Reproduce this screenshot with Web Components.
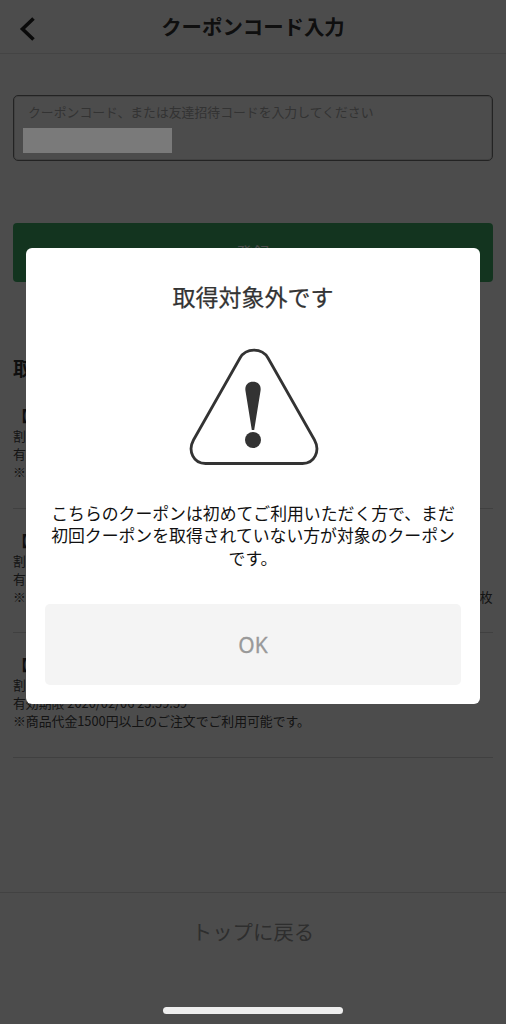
<!DOCTYPE html>
<html lang="ja">
<head>
<meta charset="utf-8">
<title>クーポンコード入力</title>
<style>
  html, body {
    margin: 0;
    padding: 0;
    background: #fff;
    font-family: "Noto Sans CJK JP", "Noto Sans", sans-serif;
    color: #333;
  }
</style>
</head>
<body>

<template id="template-coupon-header">
  <style>
    :host {
      display: flex;
      align-items: center;
      justify-content: center;
      position: relative;
      height: 53px;
      border-bottom: 1px solid #e5e5e5;
      font-size: 20.4px;
      font-weight: 700;
      line-height: 1;
    }
    svg {
      position: absolute;
      left: 17px;
      top: 14px;
    }
  </style>
  <svg width="22" height="30" viewBox="0 0 22 30">
    <path d="M16.5 4.5 L5.5 15 L16.5 25.5" fill="none" stroke="#222" stroke-width="3.6"/>
  </svg>
  <slot></slot>
</template>

<template id="template-coupon-input">
  <style>
    :host {
      display: flex;
      flex-direction: column;
      position: relative;
      box-sizing: border-box;
      height: 66px;
      margin: 41px 13px 0;
      padding: 8px 14px;
      border: 1px solid #777;
      box-shadow: inset 0 0 0 1px #ddd;
      border-radius: 5px;
      font-size: 12.85px;
      line-height: 15px;
      color: #aaa;
    }
    .masked {
      position: absolute;
      left: 9px;
      top: 32px;
      width: 149px;
      height: 25px;
      background: #7a7a7a;
      z-index: 20;
    }
  </style>
  <slot></slot>
  <div class="masked"></div>
</template>

<template id="template-primary-button">
  <style>
    :host {
      display: flex;
      align-items: center;
      justify-content: center;
      height: 59px;
      margin: 62px 13px 0;
      border-radius: 4px;
      background: #42b06a;
      color: #fff;
      font-size: 17px;
    }
  </style>
  <slot></slot>
</template>

<template id="template-coupon-list">
  <style>
    :host {
      display: block;
      margin: 0 13px;
      padding-top: 73px;
    }
    h2 {
      margin: 0;
      font-size: 19px;
      line-height: 26px;
      font-weight: 700;
    }
    .items {
      margin-top: 3px;
    }
  </style>
  <h2><slot name="heading"></slot></h2>
  <div class="items"><slot></slot></div>
</template>

<template id="template-coupon-item">
  <style>
    :host {
      display: block;
      height: 124.5px;
      box-sizing: border-box;
      border-bottom: 1px solid #d8d8d8;
      font-size: 12.85px;
      line-height: 18px;
      white-space: nowrap;
    }
    .title {
      padding-top: 21px;
      font-size: 15px;
      font-weight: 700;
      line-height: 22px;
    }
    ::slotted(div) {
      color: #444;
    }
  </style>
  <div class="title"><slot name="title"></slot></div>
  <slot></slot>
</template>

<template id="template-page-footer">
  <style>
    :host {
      display: flex;
      align-items: center;
      justify-content: center;
      position: absolute;
      left: 0;
      right: 0;
      top: 892px;
      height: 76px;
      border-top: 1px solid #ddd;
      font-size: 20.4px;
      color: #999;
    }
  </style>
  <slot></slot>
</template>

<template id="template-alert-dialog">
  <style>
    :host {
      display: block;
      position: fixed;
      inset: 0;
      box-sizing: border-box;
      padding: 248px 26px 0;
      background: rgba(0, 0, 0, 0.7);
      z-index: 10;
    }
    .panel {
      display: flex;
      flex-direction: column;
      align-items: center;
      box-sizing: border-box;
      height: 456px;
      padding: 0 19px;
      background: #fff;
      border-radius: 6px;
    }
    h1 {
      margin: 31px 0 0;
      font-size: 23px;
      line-height: 34px;
      font-weight: 400;
      -webkit-text-stroke: 0.25px #333;
      color: #333;
    }
    svg {
      display: block;
      margin: 36px 0 0 1px;
      overflow: visible;
    }
    .message {
      margin-top: 37px;
      width: 416px;
      font-size: 16.85px;
      line-height: 22.3px;
      text-align: center;
      color: #111;
    }
    button {
      display: block;
      margin-top: 35px;
      width: 416px;
      height: 81px;
      padding: 2px 0 0;
      border: 0;
      border-radius: 5px;
      background: #f4f4f4;
      color: #999;
      font: 400 21px "Noto Sans", "Noto Sans CJK JP", sans-serif;
      -webkit-text-stroke: 0.3px #999;
    }
  </style>
  <div class="panel">
    <h1><slot name="title"></slot></h1>
    <svg width="128" height="116" viewBox="0 0 128 116">
      <path d="M50 9 C56 -1.5 72 -1.5 78 9 L124.5 91 C130.5 102 124.5 114.5 112.5 114.5 L15.5 114.5 C3.5 114.5 -2.5 102 3.5 91 Z" fill="none" stroke="#333" stroke-width="2.8"/>
      <path d="M61.8 81 L55.5 42 C54.5 36 58 32.7 63 32.7 C68 32.7 71.5 36 70.5 42 L64.2 81 Z" fill="#333"/>
      <circle cx="63" cy="91" r="8" fill="#333"/>
    </svg>
    <div class="message"><slot></slot></div>
    <button>OK</button>
  </div>
</template>

<template id="template-home-indicator">
  <style>
    :host {
      display: block;
      position: fixed;
      left: 163px;
      top: 1007px;
      width: 180px;
      height: 6.5px;
      border-radius: 4px;
      background: #eee;
      z-index: 20;
    }
  </style>
</template>

<coupon-header>クーポンコード入力</coupon-header>
<coupon-input>クーポンコード、または友達招待コードを入力してください</coupon-input>
<primary-button>登録</primary-button>
<coupon-list>
  <span slot="heading">取得可能なクーポン</span>
  <coupon-item>
    <span slot="title">【初回限定】500円OFFクーポン</span>
    <div>割引金額 500円</div>
    <div>有効期限 2020/02/06 23:59:59</div>
    <div>※商品代金1500円以上のご注文でご利用可能です。</div>
  </coupon-item>
  <coupon-item>
    <span slot="title">【初回限定】300円OFFクーポン</span>
    <div>割引金額 300円</div>
    <div>有効期限 2020/02/06 23:59:59</div>
    <div>※商品代金1500円以上のご注文でご利用可能です。クーポンはお一人様につき 一枚</div>
  </coupon-item>
  <coupon-item>
    <span slot="title">【初回限定】200円OFFクーポン</span>
    <div>割引金額 200円</div>
    <div>有効期限 2020/02/06 23:59:59</div>
    <div>※商品代金1500円以上のご注文でご利用可能です。</div>
  </coupon-item>
</coupon-list>
<page-footer>トップに戻る</page-footer>
<alert-dialog>
  <span slot="title">取得対象外です</span>
  こちらのクーポンは初めてご利用いただく方で、まだ初回クーポンを取得されていない方が対象のクーポンです。
</alert-dialog>
<home-indicator></home-indicator>

<script>
  (function(){
    // every element here only stamps its template, the content comes in by slots
    function defineFromTemplate(name) {
      const templateContent = document.querySelector('template#template-' + name).content;

      customElements.define(name, class extends HTMLElement {
        constructor() {
          super();
          const shadowRoot = this.attachShadow({mode: 'open'});
          shadowRoot.appendChild(templateContent.cloneNode(true));
        }
      });
    }

    ['coupon-header', 'coupon-input', 'primary-button', 'coupon-list', 'coupon-item',
     'page-footer', 'alert-dialog', 'home-indicator'].forEach(defineFromTemplate);
  })();
</script>
</body>
</html>
